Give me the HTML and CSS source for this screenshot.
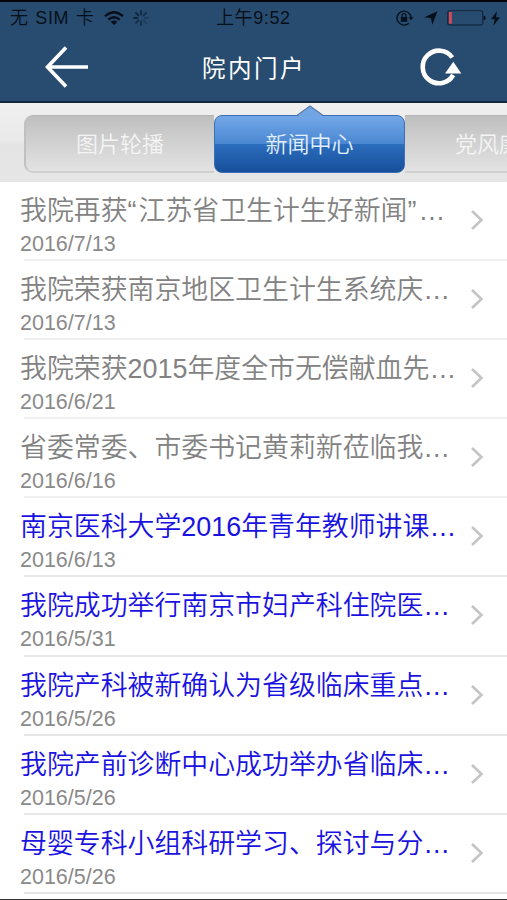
FILE: index.html
```html
<!DOCTYPE html>
<html lang="zh-CN">
<head>
    <meta charset="UTF-8">
    <meta name="viewport" content="width=device-width, initial-scale=1.0">
    <title>院内门户</title>
    <link rel="stylesheet" href="styles.css">
</head>
<body>
  <div class="header">
    <div class="status">
      <span class="carrier">无 SIM 卡</span>
      <svg class="wifi" width="20" height="15" viewBox="0 0 20 15" fill="none" stroke="#07101a" stroke-width="2.4">
        <path d="M1 5.2Q10 -2.8 19 5.2"/>
        <path d="M4.3 8.7Q10 3.6 15.7 8.7"/>
        <path d="M10 14L6.6 10.8Q10 8.2 13.4 10.8Z" fill="#07101a" stroke="none"/>
      </svg>
      <svg class="spinner" width="16" height="16" viewBox="0 0 16 16" stroke="#10263d" stroke-width="1.8" stroke-linecap="round">
        <path d="M8 1v3.5M3 3l2.5 2.5M1 8h3.5"/>
        <path d="M13 3l-2.500 2.500M3 13l2.500-2.500M8 15v-3.500" opacity=".75"/>
        <path d="M15 8h-3.500M13 13l-2.500-2.500" opacity=".35"/>
      </svg>
      <span class="time">上午9:52</span>
      <svg class="lock" width="18" height="16" viewBox="0 0 18 16" fill="none" stroke="#07101a">
        <path d="M12.800 13.200A7 7 0 1 1 15 8" stroke-width="1.300"/>
        <path d="M12.500 7.300h5l-2.500 3z" fill="#07101a" stroke="none"/>
        <rect x="4.800" y="7" width="6.400" height="4.800" fill="#07101a" stroke="none"/>
        <path d="M6 7V5.700a2 2 0 0 1 4 0V7" stroke-width="1.300"/>
      </svg>
      <svg class="location" width="14" height="14" viewBox="0 0 14 14" fill="#07101a">
        <path d="M13.500 .3L8.300 13.800L7 7.200L.3 6.300z"/>
      </svg>
      <svg class="battery" width="39" height="16" viewBox="0 0 39 16">
        <rect x=".7" y=".7" width="35" height="14.300" rx="2" fill="none" stroke="#142c45" stroke-width="1.300"/>
        <rect x="2" y="2" width="2.800" height="11.700" fill="#df4750"/>
        <path d="M36.500 5.500q2.200 .3 2.200 2.400t-2.200 2.400z" fill="#07101a"/>
      </svg>
      <svg class="bolt" width="9" height="15" viewBox="0 0 9 15" fill="#07101a">
        <path d="M6 0L0 8.300h3.800L2.200 15 9 6.300H5z"/>
      </svg>
    </div>
    <div class="navbar">
      <svg class="back" width="44" height="42" viewBox="0 0 44 42" fill="none" stroke="#fff" stroke-width="3.600">
        <path d="M21 1.500L2.500 21 21 40.500M2.500 21H43"/>
      </svg>
      <h1>院内门户</h1>
      <svg class="refresh" width="42" height="40" viewBox="0 0 42 40">
        <path d="M32.300 10.500A16.300 16.300 0 1 0 33.200 28" fill="none" stroke="#fff" stroke-width="4.600"/>
        <path d="M33.300 14.800L41.300 26.500H25z" fill="#fff"/>
      </svg>
    </div>
  </div>

  <div class="tabs">
    <a class="tab first">图片轮播</a>
    <a class="tab active">
      <svg class="pointer" width="28" height="12" viewBox="0 0 28 12">
        <path d="M0 12L14 1l14 11z" fill="#71a4e3"/>
        <path d="M1 10.500L14 1l13 9.500" fill="none" stroke="#5579a7" stroke-width="1.300"/>
      </svg>
      新闻中心
    </a>
    <a class="tab last">党风廉政</a>
  </div>

  <div class="news">
    <div class="item read">
      <div><h3>我院再获<span class="quote">“</span>江苏省卫生计生好新闻<span class="quote">”</span>…</h3><p>2016/7/13</p></div>
      <svg class="arrow" viewBox="0 0 14 22"><path d="M2 2l9.500 9L2 20"/></svg>
    </div>
    <div class="item read">
      <div><h3>我院荣获南京地区卫生计生系统庆…</h3><p>2016/7/13</p></div>
      <svg class="arrow" viewBox="0 0 14 22"><path d="M2 2l9.500 9L2 20"/></svg>
    </div>
    <div class="item read">
      <div><h3>我院荣获2015年度全市无偿献血先…</h3><p>2016/6/21</p></div>
      <svg class="arrow" viewBox="0 0 14 22"><path d="M2 2l9.500 9L2 20"/></svg>
    </div>
    <div class="item read">
      <div><h3>省委常委、市委书记黄莉新莅临我…</h3><p>2016/6/16</p></div>
      <svg class="arrow" viewBox="0 0 14 22"><path d="M2 2l9.500 9L2 20"/></svg>
    </div>
    <div class="item">
      <div><h3>南京医科大学2016年青年教师讲课…</h3><p>2016/6/13</p></div>
      <svg class="arrow" viewBox="0 0 14 22"><path d="M2 2l9.500 9L2 20"/></svg>
    </div>
    <div class="item">
      <div><h3>我院成功举行南京市妇产科住院医…</h3><p>2016/5/31</p></div>
      <svg class="arrow" viewBox="0 0 14 22"><path d="M2 2l9.500 9L2 20"/></svg>
    </div>
    <div class="item">
      <div><h3>我院产科被新确认为省级临床重点…</h3><p>2016/5/26</p></div>
      <svg class="arrow" viewBox="0 0 14 22"><path d="M2 2l9.500 9L2 20"/></svg>
    </div>
    <div class="item">
      <div><h3>我院产前诊断中心成功举办省临床…</h3><p>2016/5/26</p></div>
      <svg class="arrow" viewBox="0 0 14 22"><path d="M2 2l9.500 9L2 20"/></svg>
    </div>
    <div class="item">
      <div><h3>母婴专科小组科研学习、探讨与分…</h3><p>2016/5/26</p></div>
      <svg class="arrow" viewBox="0 0 14 22"><path d="M2 2l9.500 9L2 20"/></svg>
    </div>
  </div>
</body>
</html>
```

FILE: styles.css
```css
*{
    margin: 0;
    padding: 0;
    box-sizing: border-box;
}
body{
    width: 507px;
    height: 900px;
    overflow: hidden;
    background-color: #fff;
    border-bottom: 1px solid #333;
    font-family: "Liberation Sans", "Noto Sans CJK SC", sans-serif;
}
svg{
    display: block;
    flex: none;
}
.header{
    height: 103px;
    background-color: #284c70;
    border-top: 2px solid #02060c;
    border-bottom: 2px solid #14273d;
}
.status{
    display: flex;
    align-items: center;
    height: 32px;
    padding-left: 10px;
    color: #07101a;
    font-size: 18px;
    line-height: 32px;
    white-space: nowrap;
}
.carrier{
    width: 94px;
    font-weight: 350;
    letter-spacing: 0.7px;
    word-spacing: 0.8px;
}
.spinner{
    margin-left: 9px;
}
.time{
    width: 180px;
    margin-left: 67px;
    letter-spacing: 0.6px;
}
.location{
    margin-left: 10px;
}
.battery{
    margin-left: 9px;
}
.bolt{
    margin-left: 5px;
}
.navbar{
    display: flex;
    align-items: center;
    height: 67px;
    padding-left: 45px;
}
.back{
    margin-top: -2px;
}
.navbar h1{
    width: 218px;
    margin-top: -2px;
    margin-left: 113px;
    color: #fff;
    font-size: 23.5px;
    font-weight: 400;
    letter-spacing: 2.5px;
}
.refresh{
    margin-top: -2px;
}

/* segmented tabs */
.tabs{
    display: flex;
    height: 79px;
    padding: 12px 0 9px 24px;
    overflow: hidden;
    background: linear-gradient(#f0f0f0, #e9e9e9 50%, #e4e4e4 50%, #e6e6e6);
}
.tab{
    flex: none;
    height: 58px;
    color: #f4f4f4;
    font-size: 22px;
    font-weight: 350;
    line-height: 58px;
    text-align: center;
    background: linear-gradient(#bfbfbf, #e3e3e3);
    border-top: 1px solid #b5b5b5;
    border-bottom: 2px solid #d0d0d0;
}
.first{
    width: 190px;
    border-left: 2px solid #c0c0c0;
    border-radius: 9px 0 0 9px;
}
.active{
    position: relative;
    width: 191px;
    color: #e3f0ff;
    background: linear-gradient(#73a7e8, #4a87d1 50%, #2c6dbd 50%, #164f9b);
    border: 1px solid #3b71b3;
    border-radius: 8px;
}
.pointer{
    position: absolute;
    top: -11px;
    left: 81px;
}
.last{
    width: 188px;
}

/* news list */
.item{
    display: flex;
    justify-content: space-between;
    height: 79.1px;
    margin-left: 24px;
    padding-right: 23px;
    border-bottom: 2px solid #e6e6e6;
}
.item div{
    margin-left: -4px;
    white-space: nowrap;
}
.item h3{
    height: 50px;
    padding-top: 9px;
    color: #1a12e0;
    font-size: 26.9px;
    font-weight: 350;
    line-height: 40px;
}
.quote{
    letter-spacing: 2px;
}
.item p{
    color: #8a8a8a;
    font-size: 21.5px;
    line-height: 24px;
}
.read{
    border-color: #f0f0f0;
}
.read h3{
    color: #828282;
}
.arrow{
    width: 14px;
    height: 22px;
    margin-top: 27px;
    fill: none;
    stroke: #c4c4c4;
    stroke-width: 2.6;
}
```
